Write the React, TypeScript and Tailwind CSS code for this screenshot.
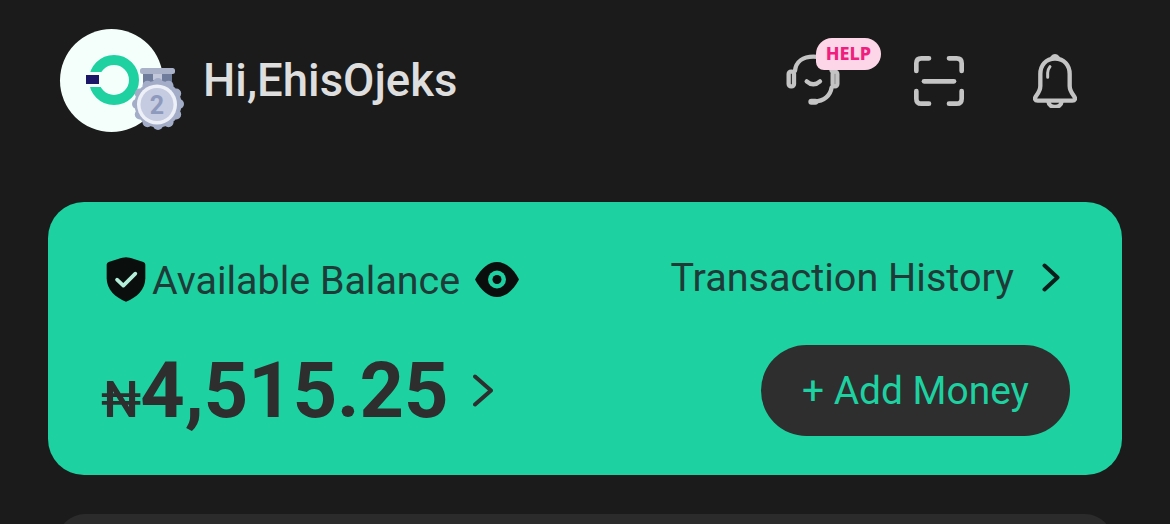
const roboto = { fontFamily: 'Roboto, sans-serif' };

// twelve bumps around the medal edge
const scallops = Array.from({ length: 12 }, (_, i) => {
  const a = (i * Math.PI) / 6;
  return { cx: 29 + 21 * Math.cos(a), cy: 38 + 21 * Math.sin(a) };
});

function Logo() {
  return (
    <div className="relative w-[103px] h-[103px] rounded-full bg-[#f4fffb] shrink-0">
      <svg className="absolute left-0 top-0" width="103" height="103" viewBox="0 0 103 103">
        <circle cx="54" cy="51" r="20" fill="none" stroke="#1fd1a0" strokeWidth="10" />
        <rect x="25" y="43" width="17" height="15" fill="#f4fffb" />
        <rect x="26" y="46" width="13" height="9" fill="#1c1668" />
      </svg>
      <svg className="absolute left-[69px] top-[37px]" width="58" height="66" viewBox="0 0 58 66">
        <rect x="11" y="2" width="35" height="6" rx="2.500" fill="#a9b2c9" />
        <rect x="14" y="8" width="29" height="16" fill="#6f7c9b" />
        <path d="M24 8h9v6l-4.500 2-4.500-2z" fill="#c3c9da" />
        <circle cx="29" cy="38" r="23.500" fill="#a3adc8" />
        {scallops.map((s) => (
          <circle key={s.cx + '-' + s.cy} cx={s.cx} cy={s.cy} r="5" fill="#a3adc8" />
        ))}
        <circle cx="28" cy="38.500" r="20" fill="#eef0f7" />
        <circle cx="28" cy="38.500" r="16.500" fill="#c5cbe0" />
        <text x="28" y="47.500" textAnchor="middle" fontSize="25" fontWeight="700" fill="#8e9abd" style={roboto}>
          2
        </text>
      </svg>
    </div>
  );
}

function HeadsetIcon() {
  return (
    <svg width="54" height="54" viewBox="0 0 162 162" fill="none" stroke="#c4c4c4" strokeWidth="13" strokeLinecap="round">
      <path d="M27 50C30 22 52 8 82 8s52 14 55 42" />
      <rect x="8" y="53" width="16" height="44" rx="7" />
      <rect x="140" y="53" width="14" height="44" rx="7" />
      <path d="M62 82q20 18 40 0" />
      <path d="M137 100c-4 24-22 42-52 42" />
      <path d="M76 143h12" strokeWidth="18" />
    </svg>
  );
}

function ScanIcon() {
  return (
    <svg width="50" height="50" viewBox="0 0 150 150" fill="none" stroke="#c4c4c4" strokeWidth="14" strokeLinecap="round" strokeLinejoin="round">
      <path d="M45 7H22Q7 7 7 22v23" />
      <path d="M105 7h23q15 0 15 15v23" />
      <path d="M45 143H22Q7 143 7 128v-23" />
      <path d="M105 143h23q15 0 15-15v-23" />
      <path d="M30 76h90" />
    </svg>
  );
}

function BellIcon() {
  return (
    <svg width="44" height="54" viewBox="0 0 132 162" fill="none" stroke="#c4c4c4" strokeWidth="13" strokeLinecap="round" strokeLinejoin="round">
      <path d="M66 14c-28 0-44 20-44 46v36c0 14-8 24-14 32-4 6-2 12 6 12h104c8 0 10-6 6-12-6-8-14-18-14-32V60c0-26-16-46-44-46z" />
      <path d="M58 11q8-9 16 0" />
      <path d="M44 70V56c0-8 3-13 7-18" strokeWidth="9" />
      <path d="M46 142c2 22 38 22 40 0" />
    </svg>
  );
}

function ShieldIcon() {
  return (
    <svg width="40" height="45" viewBox="0 0 120 135">
      <path
        d="M60 1C72 2 94 9 112 15Q118 17 118 23V64c0 34-26 58-58 70C28 122 2 98 2 64V23q0-6 6-8C26 9 48 2 60 1z"
        fill="#0a0f0e"
      />
      <path d="M33 68 52 86 88 50" fill="none" stroke="#b4eedb" strokeWidth="11" strokeLinecap="round" strokeLinejoin="round" />
    </svg>
  );
}

function EyeIcon() {
  return (
    <svg width="44" height="35" viewBox="0 0 44 35">
      <path d="M0 17.500C6 6 14 0 22 0s16 6 22 17.500C38 29 30 35 22 35S6 29 0 17.500z" fill="#0a0f0e" />
      <circle cx="22" cy="17.500" r="9" fill="#1dd1a1" />
      <circle cx="22" cy="17.500" r="4.500" fill="#0a0f0e" />
    </svg>
  );
}

export default function App() {
  return (
    <div className="h-[524px] w-[1170px] overflow-hidden bg-[#1b1b1b] pt-[29px]" style={roboto}>
      {/* Header */}
      <header className="flex items-center pl-[60px] pr-[93px]">
        <Logo />
        <span className="ml-[40px] text-[45.500px] leading-none font-medium text-[#dedede]">Hi,EhisOjeks</span>
        <div className="ml-auto flex items-center">
          <div className="relative">
            <HeadsetIcon />
            <span
              className="absolute left-[30px] top-[-16px] flex h-[32px] w-[65px] items-center justify-center rounded-[16px] rounded-bl-[8px] bg-[#fdd6e7] text-[18px] font-extrabold text-[#f01f7f]"
              style={{ fontFamily: '"Noto Sans", sans-serif' }}
            >
              HELP
            </span>
          </div>
          <div className="ml-[74px]">
            <ScanIcon />
          </div>
          <div className="ml-[69px]">
            <BellIcon />
          </div>
        </div>
      </header>

      {/* Balance card */}
      <section className="mx-[48px] mt-[70px] flex h-[273px] flex-col rounded-[36px] bg-[#1dd1a1] pl-[53px] pr-[52px]">
        <div className="mt-[55px] flex items-center justify-between">
          <div className="ml-[5px] flex items-center">
            <ShieldIcon />
            <span className="ml-[6px] pt-[3px] text-[39.400px] leading-none text-[#1f3b38]">Available Balance</span>
            <span className="ml-[15px]">
              <EyeIcon />
            </span>
          </div>
          <div className="mb-[4px] mr-[10px] flex items-center">
            <span className="text-[39.600px] leading-none text-[#1f3b38]">Transaction History</span>
            <svg className="ml-[28px]" width="18" height="29" viewBox="0 0 18 29" fill="none" stroke="#0a1f1c" strokeWidth="4" strokeLinecap="round" strokeLinejoin="round">
              <path d="M2.500 2.500 15.500 14.500 2.500 26.500" />
            </svg>
          </div>
        </div>
        <div className="mt-[43px] flex items-center justify-between">
          <div className="flex items-center text-[#2e2e2e]">
            <span className="flex items-baseline font-bold leading-none">
              <span className="mr-[-1px] text-[50px] font-medium">₦</span>
              <span className="text-[77.500px]">4,515.25</span>
            </span>
            <svg className="ml-[24px]" width="20" height="33" viewBox="0 0 20 33" fill="none" stroke="#2e2e2e" strokeWidth="4" strokeLinecap="round" strokeLinejoin="round">
              <path d="M2 2.500 18 16.500 2 30.500" />
            </svg>
          </div>
          <button className="flex h-[91px] w-[309px] items-center justify-center rounded-full bg-[#2e2e2e] pt-[2px] text-[38.900px] text-[#1dd1a1]">
            + Add Money
          </button>
        </div>
      </section>

      {/* Next card, cut off by the screenshot */}
      <div className="mx-[57px] mt-[39px] h-[60px] rounded-t-[28px] bg-[#2b2b2b]" />
    </div>
  );
}
